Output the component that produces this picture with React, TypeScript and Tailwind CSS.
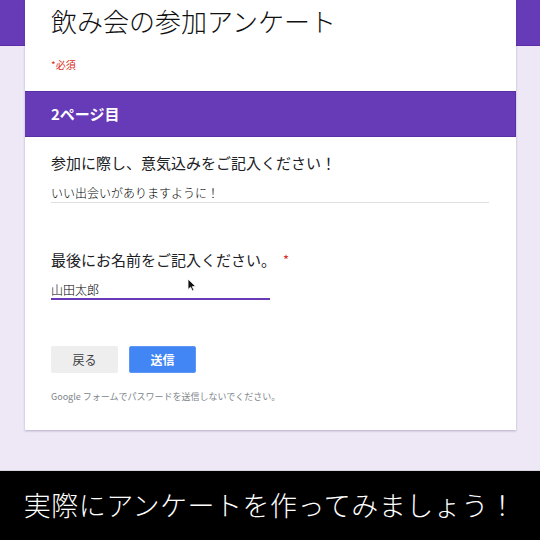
import React from 'react'

const font = { fontFamily: '"Noto Sans CJK JP", "Noto Sans", sans-serif' }

function Cursor() {
  return (
    <svg
      className="absolute left-[187px] top-[278px]"
      width="10"
      height="14"
      viewBox="0 0 10 14"
    >
      <path
        d="M1 1 L1 11.5 L3.6 9.2 L5.4 13 L7 12.3 L5.3 8.6 L8.8 8.6 Z"
        fill="#111"
        stroke="#fff"
        strokeWidth="0.8"
        strokeLinejoin="round"
      />
    </svg>
  )
}

export default function App() {
  return (
    <div
      className="relative flex h-[540px] w-[540px] flex-col overflow-hidden bg-[#ede7f6]"
      style={font}
    >
      <div className="flex-1 bg-[linear-gradient(to_bottom,#673ab7_45px,#5a2fa6_45px,#5a2fa6_46px,#ede7f6_46px)]">
        <div className="ml-[25px] w-[491px] bg-white shadow-[0_1px_2px_rgba(60,40,100,0.3)]">
          <div className="h-[91px] px-[26px] pt-[8px]">
            <div className="text-[26px] font-light leading-[26px] text-[#111]">飲み会の参加アンケート</div>
            <div className="mt-[24px] text-[10px] leading-[14px] text-[#d93025]">*必須</div>
          </div>

          <div className="flex h-[46px] items-center border-y border-r border-[#5a2fa6] bg-[#673ab7] px-[26px]">
            <span className="text-[15px] font-bold text-white">2ページ目</span>
          </div>

          <div className="px-[26px] pb-[27px] pt-[16px]">
            <div className="text-[15px] leading-[20px] text-[#202124]">参加に際し、意気込みをご記入ください！</div>
            <div className="mt-[12px] w-[438px] border-b border-[#e0e0e0] pb-[1px] text-[12px] font-light leading-[16px] text-[#000]">
              いい出会いがありますように！
            </div>

            <div className="mt-[47px] flex items-start text-[15px] leading-[20px] text-[#202124]">
              <span>最後にお名前をご記入ください。</span>
              <span className="ml-[7px] text-[13px] text-[#d93025]">*</span>
            </div>
            <div className="mt-[12px] w-[219px] border-b-2 border-[#673ab7] text-[12px] font-light leading-[16px] text-[#000]">
              山田太郎
            </div>

            <div className="mt-[46px] flex gap-[11px]">
              <button className="flex h-[27px] w-[67px] items-center justify-center rounded-[2px] bg-[#eeeeee] text-[12px] text-[#3c4043]">
                戻る
              </button>
              <button className="flex h-[27px] w-[67px] items-center justify-center rounded-[2px] border border-[#5e97f6] bg-[#4285f4] text-[12px] font-bold text-white">
                送信
              </button>
            </div>

            <div className="mt-[18px] text-[9px] leading-[12px] text-[#80868b]">
              Google フォームでパスワードを送信しないでください。
            </div>
          </div>
        </div>
      </div>

      <div className="flex h-[70px] items-center justify-center border-t border-[#d8d2e0] bg-black">
        <span className="text-[27px] font-light tracking-[0.5px] text-white">実際にアンケートを作ってみましょう！</span>
      </div>

      <Cursor />
    </div>
  )
}
